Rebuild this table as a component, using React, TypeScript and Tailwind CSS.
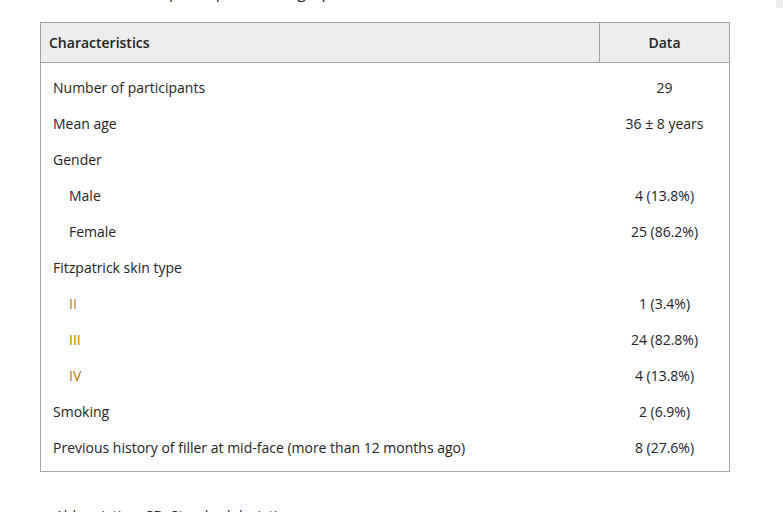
type Row = { label: string; value?: string; indent?: boolean; roman?: boolean }

const rows: Row[] = [
  { label: 'Number of participants', value: '29' },
  { label: 'Mean age', value: '36 ± 8 years' },
  { label: 'Gender' },
  { label: 'Male', value: '4 (13.8%)', indent: true },
  { label: 'Female', value: '25 (86.2%)', indent: true },
  { label: 'Fitzpatrick skin type' },
  { label: 'II', value: '1 (3.4%)', indent: true, roman: true },
  { label: 'III', value: '24 (82.8%)', indent: true, roman: true },
  { label: 'IV', value: '4 (13.8%)', indent: true, roman: true },
  { label: 'Smoking', value: '2 (6.9%)' },
  { label: 'Previous history of filler at mid-face (more than 12 months ago)', value: '8 (27.6%)' },
]

export default function App() {
  return (
    <div className="relative h-[512px] w-[783px] overflow-hidden bg-white font-['Open_Sans',sans-serif] text-[14px] text-[#222]">
      <div className="absolute right-0 top-0 h-[8px] w-[7px] bg-[#ececec]" />
      <p className="-mt-[19px] h-[22px] pl-[40px] text-[16px] leading-[22px] whitespace-nowrap">
        Table 1. Baseline participant demographics
      </p>
      <div className="mt-[19px] ml-[40px] w-[690px] border border-[#a3a3a3]">
        <div className="flex h-[40px] border-b border-[#a3a3a3] bg-[#ededed] font-semibold">
          <div className="flex w-[559px] items-center border-r border-[#a3a3a3] pl-[8px]">Characteristics</div>
          <div className="flex flex-1 items-center justify-center">Data</div>
        </div>
        <div className="pt-[6px] pb-[6px]">
          {rows.map((r) => (
            <div key={r.label} className="flex h-[36px] items-center">
              <div
                className={`w-[559px] ${r.indent ? 'pl-[28px]' : 'pl-[12px]'} ${r.roman ? 'text-[#b97900]' : ''}`}
              >
                {r.label}
              </div>
              <div className="flex-1 text-center">{r.value}</div>
            </div>
          ))}
        </div>
      </div>
      <p className="mt-[34px] pl-[55px] text-[14px] leading-[20px] text-[#222]">
        Abbreviation: SD, Standard deviation.
      </p>
    </div>
  )
}
